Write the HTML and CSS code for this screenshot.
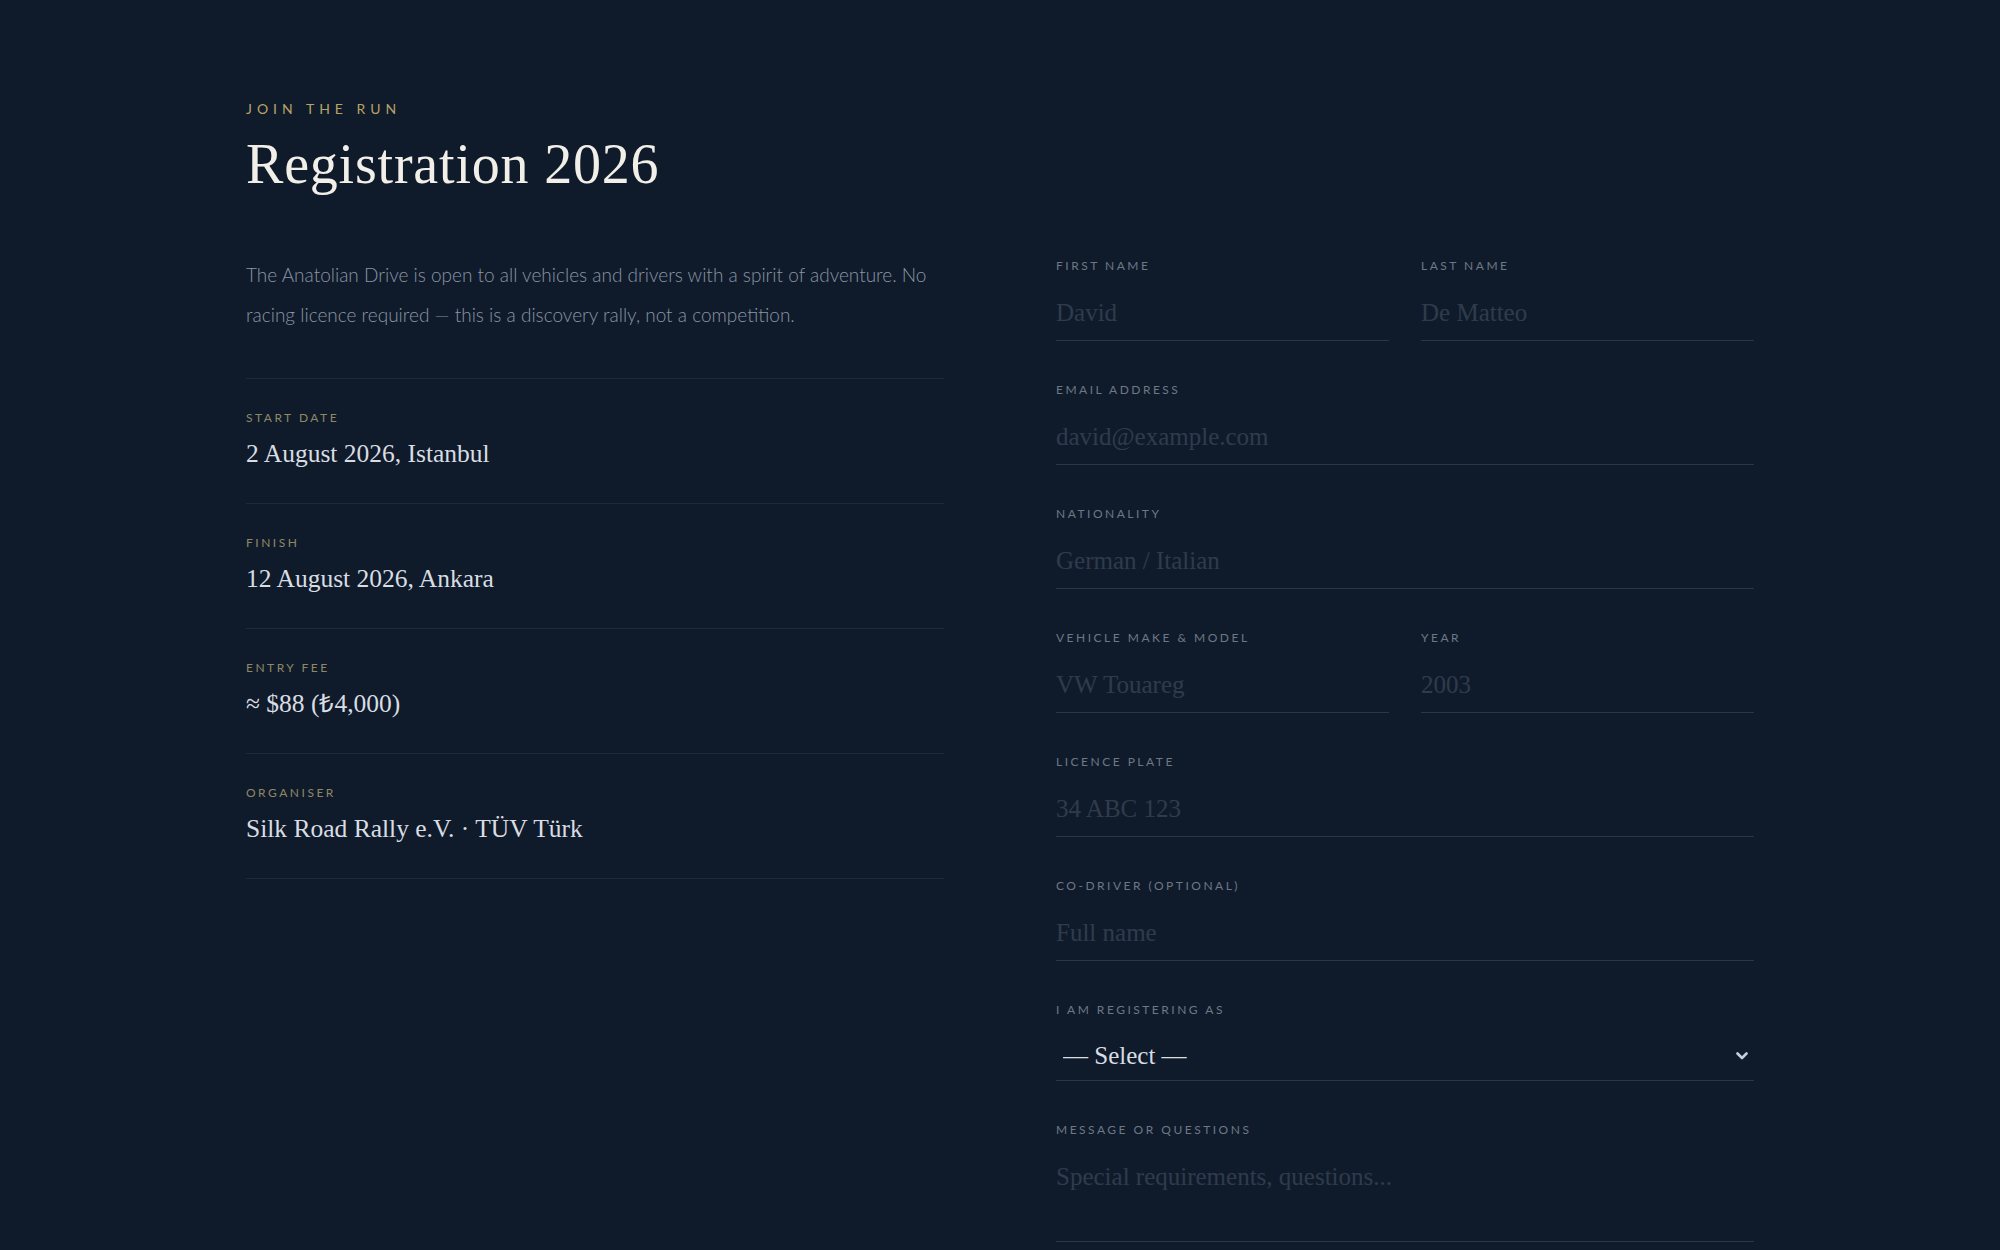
FILE: index.html
```html
<!DOCTYPE html>
<html lang="en">
<head>
    <meta charset="UTF-8">
    <meta name="viewport" content="width=device-width, initial-scale=1.0">
    <title>Registration 2026 — The Anatolian Drive</title>
    <link rel="stylesheet" href="styles.css">
</head>
<body>
    <div class="page">
        <p class="eyebrow">Join the Run</p>
        <h1 class="title">Registration 2026</h1>

        <div class="layout">
            <section class="intro">
                <p class="lead">The Anatolian Drive is open to all vehicles and drivers with a spirit of adventure. No racing licence required — this is a discovery rally, not a competition.</p>

                <dl class="facts">
                    <div class="fact">
                        <dt>Start Date</dt>
                        <dd>2 August 2026, Istanbul</dd>
                    </div>
                    <div class="fact">
                        <dt>Finish</dt>
                        <dd>12 August 2026, Ankara</dd>
                    </div>
                    <div class="fact">
                        <dt>Entry Fee</dt>
                        <dd>≈ $88 (₺4,000)</dd>
                    </div>
                    <div class="fact">
                        <dt>Organiser</dt>
                        <dd>Silk Road Rally e.V. · TÜV Türk</dd>
                    </div>
                </dl>
            </section>

            <form class="reg-form" id="registrationForm">
                <div class="row">
                    <div class="field">
                        <label for="firstName">First Name</label>
                        <input type="text" id="firstName" name="firstName" placeholder="David">
                    </div>
                    <div class="field">
                        <label for="lastName">Last Name</label>
                        <input type="text" id="lastName" name="lastName" placeholder="De Matteo">
                    </div>
                </div>
                <div class="field">
                    <label for="email">Email Address</label>
                    <input type="email" id="email" name="email" placeholder="david@example.com">
                </div>
                <div class="field">
                    <label for="nationality">Nationality</label>
                    <input type="text" id="nationality" name="nationality" placeholder="German / Italian">
                </div>
                <div class="row">
                    <div class="field">
                        <label for="vehicle">Vehicle Make &amp; Model</label>
                        <input type="text" id="vehicle" name="vehicle" placeholder="VW Touareg">
                    </div>
                    <div class="field">
                        <label for="year">Year</label>
                        <input type="text" id="year" name="year" placeholder="2003">
                    </div>
                </div>
                <div class="field">
                    <label for="plate">Licence Plate</label>
                    <input type="text" id="plate" name="plate" placeholder="34 ABC 123">
                </div>
                <div class="field">
                    <label for="coDriver">Co-Driver (Optional)</label>
                    <input type="text" id="coDriver" name="coDriver" placeholder="Full name">
                </div>
                <div class="field">
                    <label for="role">I am registering as</label>
                    <div class="select-wrap">
                        <select id="role" name="role">
                            <option value="">— Select —</option>
                            <option value="driver">Driver</option>
                            <option value="co-driver">Co-driver</option>
                            <option value="team">Team</option>
                        </select>
                        <svg class="chevron" width="12" height="8" viewBox="0 0 12 8" aria-hidden="true">
                            <path d="M1.5 1.5 L6 6 L10.5 1.5" fill="none" stroke="currentColor" stroke-width="2.6" stroke-linecap="round" stroke-linejoin="round"/>
                        </svg>
                    </div>
                </div>
                <div class="field">
                    <label for="message">Message or Questions</label>
                    <textarea id="message" name="message" placeholder="Special requirements, questions..."></textarea>
                </div>
            </form>
        </div>
    </div>
</body>
</html>
```

FILE: styles.css
```css
body {
    margin: 0;
    background-color: #0f1b2b;
    color: #d9dde2;
    font-family: 'Lato', 'Liberation Sans', sans-serif;
}

.page {
    width: 1508px;
    margin: 0 auto;
    padding: 99px 0 80px;
}

.eyebrow {
    margin: 0;
    font-size: 14px;
    line-height: 20px;
    letter-spacing: 5px;
    text-transform: uppercase;
    color: #b9a267;
}

.title {
    margin: 12px 0 57px;
    font-family: 'Liberation Serif', serif;
    font-weight: 400;
    font-size: 56px;
    line-height: 1.2;
    letter-spacing: 0.8px;
    color: #f2efe8;
}

.layout {
    display: grid;
    grid-template-columns: 1fr 1fr;
    gap: 112px;
    align-items: start;
}

/* left column */
.lead {
    margin: 0 0 43px;
    font-size: 19px;
    font-weight: 300;
    line-height: 40px;
    color: #8b95a3;
}

.facts {
    margin: 0;
    border-top: 1px solid #1e2b34;
}

.fact {
    padding: 30px 0 31px;
    border-bottom: 1px solid #1e2b34;
}

.fact dt {
    margin-bottom: 9px;
    font-size: 12px;
    line-height: 18px;
    letter-spacing: 2.5px;
    text-transform: uppercase;
    color: #8f8865;
}

.fact dd {
    margin: 0;
    font-family: 'Liberation Serif', serif;
    font-size: 25.5px;
    line-height: 36px;
    color: #d9dde2;
}

/* form */
.reg-form {
    margin-top: 2px;
}

.row {
    display: grid;
    grid-template-columns: 1fr 1fr;
    gap: 32px;
}

.field {
    margin-bottom: 40px;
}

.field label {
    display: block;
    margin-bottom: 11px;
    font-size: 12px;
    line-height: 18px;
    letter-spacing: 2.5px;
    text-transform: uppercase;
    color: #6d7886;
}

input[type="text"],
input[type="email"],
select,
textarea {
    display: block;
    width: 100%;
    box-sizing: border-box;
    margin: 0;
    padding: 12px 0;
    border: none;
    border-bottom: 1px solid #2a3646;
    border-radius: 0;
    background: transparent;
    font-family: 'Liberation Serif', serif;
    font-size: 25px;
    line-height: 30px;
    color: #d9dde2;
    outline: none;
}

input::placeholder,
textarea::placeholder {
    color: #2f3b4c;
}

input:focus,
select:focus,
textarea:focus {
    border-bottom-color: #b9a267;
}

.select-wrap {
    position: relative;
}

select {
    appearance: none;
    -webkit-appearance: none;
    padding: 11px 7px 10px;
    line-height: 29px;
    cursor: pointer;
}

select option {
    background-color: #0f1b2b;
}

.chevron {
    position: absolute;
    right: 6px;
    top: 22px;
    color: #c5cdd7;
    pointer-events: none;
}

textarea {
    height: 92px;
    resize: none;
}
```
